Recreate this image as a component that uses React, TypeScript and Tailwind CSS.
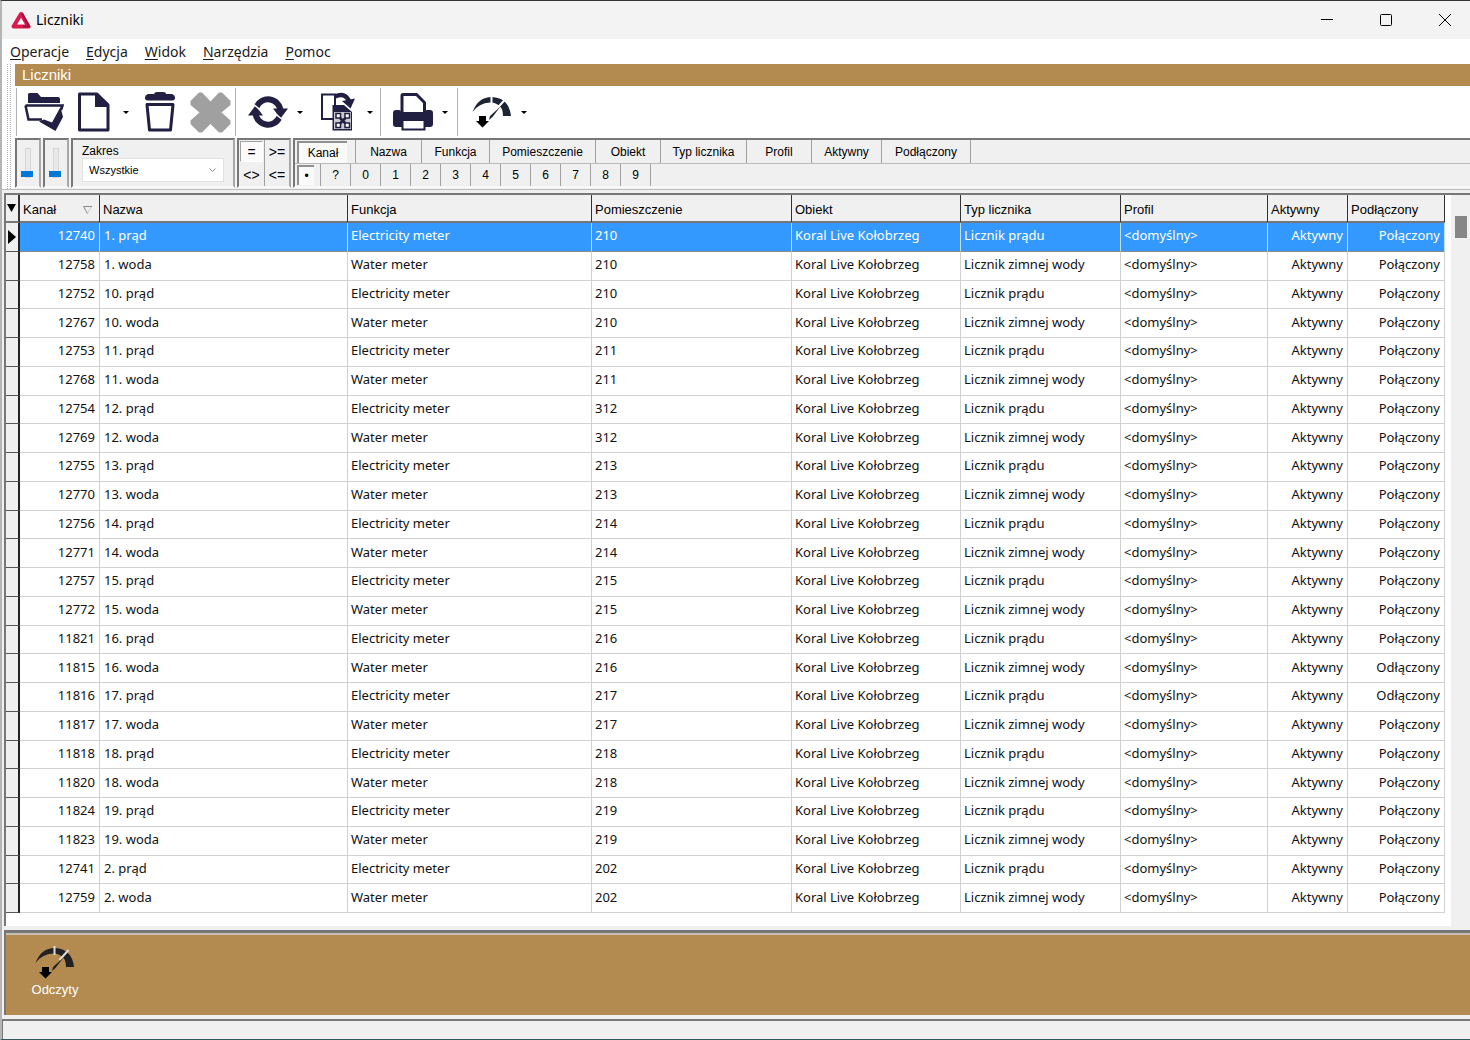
import { ReactNode } from 'react'

type Meter = {
  channel: number
  name: string
  room: string
  connected?: boolean
}

const METERS: Meter[] = [
  { channel: 12740, name: '1. prąd', room: '210' },
  { channel: 12758, name: '1. woda', room: '210' },
  { channel: 12752, name: '10. prąd', room: '210' },
  { channel: 12767, name: '10. woda', room: '210' },
  { channel: 12753, name: '11. prąd', room: '211' },
  { channel: 12768, name: '11. woda', room: '211' },
  { channel: 12754, name: '12. prąd', room: '312' },
  { channel: 12769, name: '12. woda', room: '312' },
  { channel: 12755, name: '13. prąd', room: '213' },
  { channel: 12770, name: '13. woda', room: '213' },
  { channel: 12756, name: '14. prąd', room: '214' },
  { channel: 12771, name: '14. woda', room: '214' },
  { channel: 12757, name: '15. prąd', room: '215' },
  { channel: 12772, name: '15. woda', room: '215' },
  { channel: 11821, name: '16. prąd', room: '216' },
  { channel: 11815, name: '16. woda', room: '216', connected: false },
  { channel: 11816, name: '17. prąd', room: '217', connected: false },
  { channel: 11817, name: '17. woda', room: '217' },
  { channel: 11818, name: '18. prąd', room: '218' },
  { channel: 11820, name: '18. woda', room: '218' },
  { channel: 11824, name: '19. prąd', room: '219' },
  { channel: 11823, name: '19. woda', room: '219' },
  { channel: 12741, name: '2. prąd', room: '202' },
  { channel: 12759, name: '2. woda', room: '202' },
]

const COLUMNS = [
  { label: 'Kanał', width: 'w-[80px]' },
  { label: 'Nazwa', width: '' },
  { label: 'Funkcja', width: 'w-[244px]' },
  { label: 'Pomieszczenie', width: 'w-[200px]' },
  { label: 'Obiekt', width: 'w-[169px]' },
  { label: 'Typ licznika', width: 'w-[160px]' },
  { label: 'Profil', width: 'w-[147px]' },
  { label: 'Aktywny', width: 'w-[80px]' },
  { label: 'Podłączony', width: 'w-[97px]' },
]

const TABS = [
  { label: 'Nazwa', width: 'w-[66px]' },
  { label: 'Funkcja', width: 'w-[68px]' },
  { label: 'Pomieszczenie', width: 'w-[106px]' },
  { label: 'Obiekt', width: 'w-[65px]' },
  { label: 'Typ licznika', width: 'w-[86px]' },
  { label: 'Profil', width: 'w-[65px]' },
  { label: 'Aktywny', width: 'w-[70px]' },
  { label: 'Podłączony', width: 'w-[90px]' },
]

const KEYS = ['?', '0', '1', '2', '3', '4', '5', '6', '7', '8', '9']

const MENU = ['Operacje', 'Edycja', 'Widok', 'Narzędzia', 'Pomoc']

const INK = '#211f42'

function FolderIcon() {
  return (
    <svg width="40" height="40" viewBox="0 0 40 40">
      <path d="M4 11V2.500Q4 1 5.500 1H13.500L17 5H34Q36 5 36 7V11Z" fill={INK} />
      <path d="M1.500 13.500H38.500L37 18M1.500 13.500L4.500 27.500H18" fill="none" stroke={INK} strokeWidth="2.500" />
      <path d="M15 29.500L20 27.500L28 30.500L36.500 15L39 25L31.500 39Z" fill={INK} />
    </svg>
  )
}

function PageIcon() {
  return (
    <svg width="32" height="40" viewBox="0 0 32 40">
      <path d="M1.500 2H19L30 13V38H1.500Z" fill="#fff" stroke={INK} strokeWidth="3" strokeLinejoin="round" />
      <path d="M17 2H20L31 12V15H17Z" fill={INK} />
    </svg>
  )
}

function TrashIcon() {
  return (
    <svg width="32" height="40" viewBox="0 0 32 40">
      <path d="M10 3Q10 0 13 0H19Q22 0 22 2H28Q31 3 31 6Q31 8.500 28 8.500H4Q1 8.500 1 6Q1 3 4 2H10Z" fill={INK} />
      <path d="M3 12.500H29L26.500 38H5.500Z" fill="#fff" stroke={INK} strokeWidth="3" strokeLinejoin="round" />
    </svg>
  )
}

function CrossIcon() {
  return (
    <svg width="41" height="41" viewBox="0 0 41 41">
      <path
        d="M9 .5H12L20.500 9.500L29 .5H32L40.500 9V13L31.500 20.500L40.500 28.500V32L32 40.500H29L20.500 32L12 40.500H9L.5 32V28.500L9.500 20.500L.5 13V9Z"
        fill="#a0a0a0"
      />
    </svg>
  )
}

function RefreshIcon() {
  return (
    <svg width="40" height="34" viewBox="0 0 40 34">
      <path d="M8.500 12A12.500 12.500 0 0 1 32.500 16" fill="none" stroke={INK} strokeWidth="6" />
      <path d="M7.500 18A12.500 12.500 0 0 0 31.500 22" fill="none" stroke={INK} strokeWidth="6" />
      <path d="M25 13.500H40L32.500 23.500Z" fill={INK} />
      <path d="M0 20.500L7.500 10.500L15 20.500Z" fill={INK} />
      <path d="M5 9L12 14.500M35 25L28 19.500" stroke="#fff" strokeWidth="1.500" />
    </svg>
  )
}

function CopyIcon() {
  return (
    <svg width="36" height="40" viewBox="0 0 36 40">
      <path d="M2 2.500H15V27H2Z" fill="#fff" stroke={INK} strokeWidth="2" />
      <path d="M15 4.500Q25 0 29 9" fill="none" stroke={INK} strokeWidth="4.500" />
      <path d="M22 9L35 6.500L30.500 16.500Z" fill={INK} />
      <path d="M12.500 13H24L32 20V38.500H12.500Z" fill={INK} />
      <path d="M14 20H31V37H14Z" fill="#c9c9cf" />
      <path
        d="M16 21.500H20.500V26H16ZM25 21.500H29.500V26H25ZM16 31H20.500V35.500H16ZM25 31H29.500V35.500H25Z"
        fill="#fff"
        stroke={INK}
        strokeWidth="1.500"
      />
      <path d="M20 26L25.500 31.500M25.500 26L20 31.500" stroke={INK} strokeWidth="2.500" />
    </svg>
  )
}

function PrinterIcon() {
  return (
    <svg width="40" height="38" viewBox="0 0 40 38">
      <path d="M9 20V2.500Q9 1.500 10 1.500H23.500L31.500 9.500V20" fill="#fff" stroke={INK} strokeWidth="3" />
      <path d="M3 17H6Q8 17 8 19H32Q32 17 34 17H37Q40 17 40 20V31Q40 34 37 34H3Q0 34 0 31V20Q0 17 3 17Z" fill={INK} />
      <rect x="9.500" y="27" width="22" height="9.500" fill="#fff" stroke={INK} strokeWidth="2" />
    </svg>
  )
}

function GaugeIcon({ gap = '#fff', fill = '#1d2433' }: { gap?: string; fill?: string }) {
  return (
    <svg width="40" height="34" viewBox="0 0 40 34">
      <path d="M.5 17Q6 2 20 2Q37 3 39 21H31Q31 12 25.500 9.500Q23 7.500 18 7.500Q7 8 .5 17Z" fill={fill} />
      <path d="M19.500 0V9M24.500 14L33.500 4" stroke={gap} strokeWidth="2" />
      <path d="M28.500 11.500L20.500 22L17 25L18 21Z" fill={fill} />
      <path d="M7 21H14V26H17L10.500 32.500L4 26H7Z" fill="#000" />
    </svg>
  )
}

function ToolButton({ label, children, menu }: { label: string; children: ReactNode; menu?: boolean }) {
  return (
    <div className="flex">
      <button aria-label={label} className="flex h-12 w-12 items-center justify-center">
        {children}
      </button>
      {menu && (
        <button aria-label={`${label} – opcje`} className="flex w-4 items-center justify-center">
          <svg width="6" height="3" viewBox="0 0 6 3">
            <path d="M0 0H6L3 3Z" fill="#000" />
          </svg>
        </button>
      )}
    </div>
  )
}

function Toolbar() {
  return (
    <div className="flex h-[52px] items-center bg-white pl-px">
      <div className="flex gap-[2px] border-l border-[#b4b4b4] pr-px pl-[3px]">
        <ToolButton label="Otwórz"><FolderIcon /></ToolButton>
        <ToolButton label="Nowy" menu><PageIcon /></ToolButton>
        <ToolButton label="Usuń"><TrashIcon /></ToolButton>
        <ToolButton label="Anuluj"><CrossIcon /></ToolButton>
      </div>
      <div className="flex gap-[6px] border-l border-[#b4b4b4] pr-[2px] pl-2">
        <ToolButton label="Odśwież" menu><RefreshIcon /></ToolButton>
        <ToolButton label="Kopiuj" menu><CopyIcon /></ToolButton>
      </div>
      <div className="border-l border-[#b4b4b4] pr-1 pl-2">
        <ToolButton label="Drukuj" menu><PrinterIcon /></ToolButton>
      </div>
      <div className="border-l border-[#b4b4b4] pl-[10px]">
        <ToolButton label="Odczyt" menu><GaugeIcon /></ToolButton>
      </div>
    </div>
  )
}

function Panel({ className, children }: { className: string; children: ReactNode }) {
  return (
    <div className={`border-2 border-t-[#777] border-r-[#a8a8a8] border-b-[#f8f8f8] border-l-[#777] bg-[#f0f0f0] ${className}`}>
      {children}
    </div>
  )
}

function LevelSlider({ label }: { label: string }) {
  return (
    <Panel className="flex w-[26px] justify-center pt-2">
      <input
        type="range"
        aria-label={label}
        defaultValue={0}
        className="h-[30px] w-[6px] appearance-none border border-[#d6d6d6] bg-[#e9e9e9] [direction:rtl] [writing-mode:vertical-lr] [&::-webkit-slider-thumb]:-ml-[3px] [&::-webkit-slider-thumb]:h-[6px] [&::-webkit-slider-thumb]:w-3 [&::-webkit-slider-thumb]:appearance-none [&::-webkit-slider-thumb]:bg-[#0078d7]"
      />
    </Panel>
  )
}

function FilterBar() {
  return (
    <div className="flex h-[51px] gap-[2px] bg-[#f4f4f4] pb-px font-['Liberation_Sans',Arial,sans-serif] text-xs text-black">
      <LevelSlider label="Poziom 1" />
      <LevelSlider label="Poziom 2" />
      <Panel className="w-[164px] pt-1 pl-[9px]">
        <label htmlFor="zakres" className="block h-[14px] leading-[14px]">Zakres</label>
        <div className="relative w-[142px]">
          <select
            id="zakres"
            className="h-6 w-full appearance-none border border-[#e2e2e2] bg-white px-[6px] text-[11px]"
          >
            <option>Wszystkie</option>
          </select>
          <svg className="pointer-events-none absolute top-[10px] right-2" width="7" height="5" viewBox="0 0 7 5">
            <path d="M.5 .5L3.500 3.500L6.500 .5" fill="none" stroke="#888" />
          </svg>
        </div>
      </Panel>
      <Panel className="grid w-[54px] grid-cols-2 grid-rows-2 text-sm">
        <button className="m-px border border-t-[#a0a0a0] border-r-white border-b-white border-l-[#a0a0a0] bg-[#fafafa]">=</button>
        <button className="border-l border-[#a0a0a0]">&gt;=</button>
        <button>&lt;&gt;</button>
        <button className="border-l border-[#a0a0a0]">&lt;=</button>
      </Panel>
      <Panel className="flex-1 border-r-0">
        <div className="flex h-6 items-stretch border-b border-[#bbb]">
          <div className="w-[60px] pt-px pr-2 pl-[2px]">
            <button className="h-full w-full border-t-2 border-l-2 border-[#909090] bg-[#fafafa]">Kanał</button>
          </div>
          {TABS.map((tab) => (
            <button key={tab.label} className={`border-l border-[#a0a0a0] last:border-r ${tab.width}`}>
              {tab.label}
            </button>
          ))}
        </div>
        <div className="flex h-[22px]">
          <div className="w-[25px] py-px pr-[6px] pl-[2px]">
            <button className="h-full w-full border-t-2 border-l-2 border-[#909090] bg-[#fafafa] leading-none">•</button>
          </div>
          {KEYS.map((key) => (
            <button key={key} className="w-[30px] border-l border-[#a0a0a0] last:w-[31px] last:border-r">
              {key}
            </button>
          ))}
        </div>
      </Panel>
    </div>
  )
}

function MeterRow({ meter, selected }: { meter: Meter; selected: boolean }) {
  const water = meter.name.endsWith('woda')
  const base = selected
    ? 'border-r border-b border-r-[#c4dffb] border-b-[#8a8a8a] pb-[3px]'
    : 'border-r border-b border-[#d0d0d0] pb-[3px]'
  const cell = `${base} px-[3px]`
  const right = `${base} px-1 text-right`

  return (
    <tr className={selected ? 'bg-[#3399ff] text-white' : 'text-[#111]'}>
      <td className="border-r-2 border-b border-r-[#222] border-b-[#555] bg-[#f0f0f0] p-0">
        {selected && (
          <svg className="ml-[2px]" width="8" height="14" viewBox="0 0 8 14">
            <path d="M0 0L8 7L0 14Z" fill="#000" />
          </svg>
        )}
      </td>
      <td className={right}>{meter.channel}</td>
      <td className={`${base} px-1`}>{meter.name}</td>
      <td className={cell}>{water ? 'Water meter' : 'Electricity meter'}</td>
      <td className={cell}>{meter.room}</td>
      <td className={cell}>Koral Live Kołobrzeg</td>
      <td className={cell}>{water ? 'Licznik zimnej wody' : 'Licznik prądu'}</td>
      <td className={cell}>&lt;domyślny&gt;</td>
      <td className={right}>Aktywny</td>
      <td className={right}>{meter.connected === false ? 'Odłączony' : 'Połączony'}</td>
    </tr>
  )
}

function MeterGrid() {
  return (
    <div className="flex min-h-0 flex-1 border-t-2 border-l-2 border-[#777] bg-white">
      <div className="min-w-0 flex-1 pr-[6px] pb-[13px]">
        <table className="h-full w-full table-fixed border-separate border-spacing-0 text-left text-[13px] leading-4 whitespace-nowrap">
          <thead className="font-['Liberation_Sans',Arial,sans-serif] text-[13px] text-black">
            <tr className="h-7 bg-[#f0f0f0]">
              <th className="w-[14px] border-r-2 border-b-2 border-[#333] border-b-[#777] p-0">
                <svg className="ml-px" width="9" height="8" viewBox="0 0 9 8">
                  <path d="M0 0H9L4.500 8Z" fill="#000" />
                </svg>
              </th>
              {COLUMNS.map((col, i) => (
                <th key={col.label} className={`border-r border-b-2 border-r-[#333] border-b-[#777] px-[3px] pt-[3px] pb-0 font-normal ${col.width}`}>
                  <div className="flex items-center justify-between">
                    {col.label}
                    {i === 0 && (
                      <svg className="mr-1" width="9" height="8" viewBox="0 0 9 8">
                        <path d="M8.500 .5L4.500 7.500" stroke="#ccc" />
                        <path d="M9 .5H.5L4.500 7.500" fill="none" stroke="#888" />
                      </svg>
                    )}
                  </div>
                </th>
              ))}
            </tr>
          </thead>
          <tbody>
            {METERS.map((meter, i) => (
              <MeterRow key={meter.channel} meter={meter} selected={i === 0} />
            ))}
          </tbody>
        </table>
      </div>
      <div className="w-[19px] bg-[#f0f0f0] pt-[21px] pl-1">
        <div className="h-[22px] w-3 bg-[#868686]" />
      </div>
    </div>
  )
}

export default function App() {
  return (
    <div className="flex h-screen flex-col border-t border-b border-t-[#333] border-b-[#2f5a5c] border-l-2 border-l-[#b5b5b5] bg-[#f0f0f0] font-['Noto_Sans','Segoe_UI',sans-serif]">
      <header className="flex h-[38px] shrink-0 items-center bg-[#f3f3f3] pr-[18px] pl-[9px] text-sm text-black">
        <svg width="20" height="18" viewBox="0 0 20 18">
          <path d="M10 3L17.500 15.500H2.500Z" fill="#fff" stroke="#d81b4f" strokeWidth="4" strokeLinejoin="round" />
          <path d="M11 2L18 15.500H12" fill="none" stroke="#a80f3c" strokeWidth="2" />
        </svg>
        <h1 className="ml-[5px] flex-1">Liczniki</h1>
        <div className="flex gap-[45px]">
          <button aria-label="Minimalizuj">
            <svg width="14" height="14" viewBox="0 0 14 14"><path d="M1 6.500H13" stroke="#000" /></svg>
          </button>
          <button aria-label="Maksymalizuj">
            <svg width="14" height="14" viewBox="0 0 14 14">
              <rect x="1.500" y="1.500" width="11" height="11" rx="1" fill="none" stroke="#000" />
            </svg>
          </button>
          <button aria-label="Zamknij">
            <svg width="14" height="14" viewBox="0 0 14 14"><path d="M1 1L13 13M13 1L1 13" stroke="#000" /></svg>
          </button>
        </div>
      </header>

      <nav className="flex h-[25px] shrink-0 items-center gap-[17px] bg-white pl-2 text-sm text-[#1a1a1a]">
        {MENU.map((item) => (
          <button key={item}>
            <span className="underline underline-offset-2">{item[0]}</span>
            {item.slice(1)}
          </button>
        ))}
      </nav>

      <div className="flex shrink-0 bg-white">
        <div className="flex w-[13px] justify-center gap-[2px]">
          <span className="border-l border-dotted border-[#b0b0b0]" />
          <span className="border-l border-dotted border-[#b0b0b0]" />
        </div>
        <div className="min-w-0 flex-1">
          <h2 className="h-[22px] bg-[#b38a4f] pl-[7px] font-['Liberation_Sans',Arial,sans-serif] text-[15px] leading-[22px] text-white">
            Liczniki
          </h2>
          <Toolbar />
          <FilterBar />
        </div>
      </div>

      <main className="flex min-h-0 flex-1 flex-col border-t border-[#bbb] pt-[3px] pl-[2px]">
        <MeterGrid />
      </main>

      <section className="mt-1 ml-[2px] shrink-0 border-t-[3px] border-l-2 border-[#777]">
        <div className="h-[82px] border-t-2 border-[#c8c0b4] bg-[#b38a4f] pt-[11px] pl-6">
          <button className="flex w-[50px] flex-col items-center gap-[2px] font-['Liberation_Sans',Arial,sans-serif] text-[13px] leading-4 text-white">
            <GaugeIcon gap="#ddd" fill="#222" />
            Odczyty
          </button>
        </div>
      </section>

      <footer className="mt-1 h-5 shrink-0 border-t-2 border-l border-[#777] bg-[#f0f0f0]" />
    </div>
  )
}
